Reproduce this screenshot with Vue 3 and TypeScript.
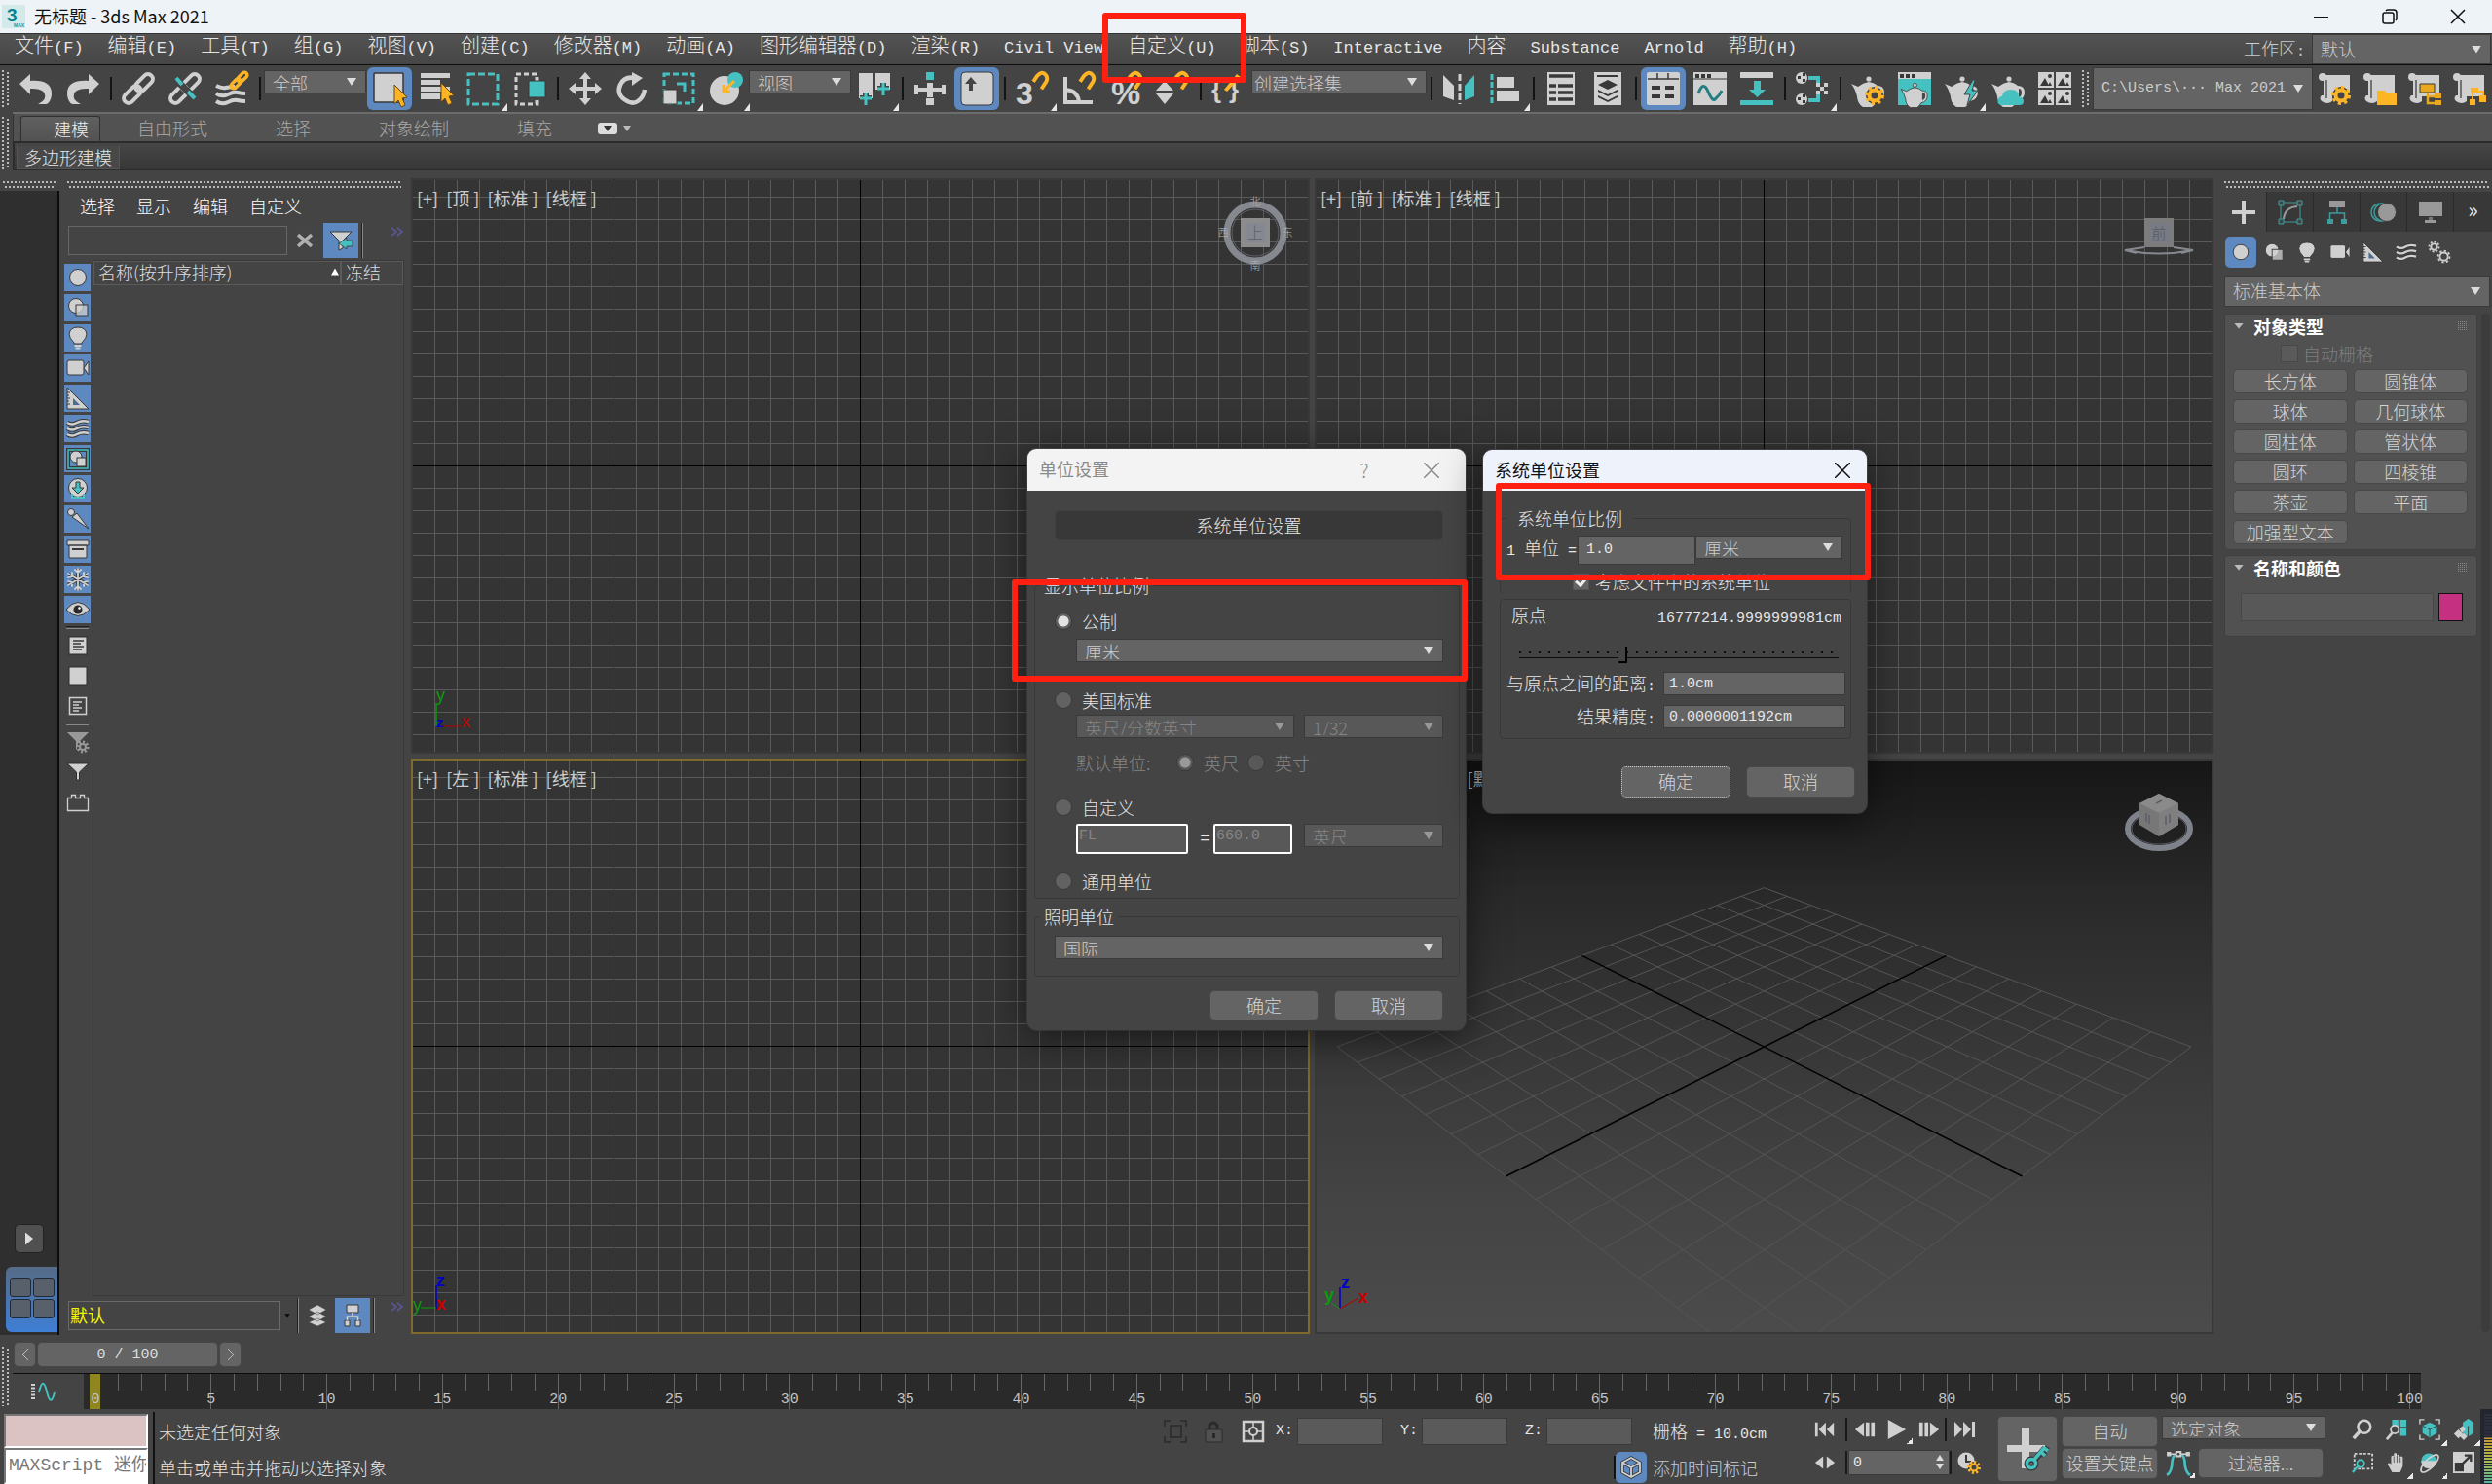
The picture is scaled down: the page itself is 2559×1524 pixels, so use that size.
<script setup lang="ts">
import { h, ref } from 'vue'

const G = '#d0d0d0'
const T = '#45c1c1'
const Y = '#fdb425'
const D = '#383838'

const gear = (cx: number, cy: number, r: number, c: string, w = 3): string =>
  `<circle cx="${cx}" cy="${cy}" r="${r}" fill="none" stroke="${c}" stroke-width="${w}"/>` +
  `<circle cx="${cx}" cy="${cy}" r="${r + w / 2 + 1}" fill="none" stroke="${c}" stroke-width="3" pathLength="80" stroke-dasharray="5 5"/>`
const corner = `<path d="M42 32v8h-6z" fill="#e8e8e8"/>`
const teapot = (x: number, y: number, s: number, c: string): string =>
  `<g transform="translate(${x} ${y}) scale(${s})"><circle cx="18" cy="3" r="2.6" fill="${c}"/><path d="M0 8l7 3q5-4 11-5 6 1 9 4 7 0 7 7 0 7-8 9-2 4-5 6H12Q6 28 6 21 4 13 0 8z" fill="${c}"/><path d="M28 13q3 0 3 4t-3 5z" fill="#444"/></g>`
const chain = (c: string, w: number): string =>
  `<g transform="rotate(-45 17 17)" fill="none" stroke="${c}" stroke-width="${w}"><rect x="-2" y="12" width="21" height="10" rx="5"/><rect x="15" y="12" width="21" height="10" rx="5"/></g>`
const waves = (c: string, w: number): string =>
  `<g fill="none" stroke="${c}" stroke-width="${w}"><path d="M1 6q5 3 10 0t12-1"/><path d="M1 12q5 3 10 0t12-1"/><path d="M1 18q5 3 10 0t12-1"/></g>`
const magnet = `<path d="M18 10l4-6q5-6 9-1 3 4-1 9l-4 6" fill="none" stroke="${Y}" stroke-width="4"/><path d="M16 9l4 3M24 16l4 3" stroke="${D}" stroke-width="1"/>`
const cursor = (x: number, y: number): string =>
  `<path d="M${x} ${y}l13 13-5 1 3 7-4 2-3-7-4 4z" fill="${Y}" stroke="#6b4a10" stroke-width="1"/>`
const scroll = `<path d="M5 3h27v22H14v5q-5 4-11 0-3-3 0-6h2z" fill="${G}"/><circle cx="4" cy="5" r="4" fill="${G}"/><path d="M8 8v19" stroke="#555" stroke-width="1.5"/>`
const orb = `<circle cx="12" cy="12" r="8.5" fill="${G}" stroke="${D}"/>`
const diamonds = `<path d="M12 1l9 5-9 5-9-5zM12 8l9 5-9 5-9-5zM12 15l9 4-9 4-9-4z" fill="${G}" stroke="${D}" stroke-width=".5"/>`

const art: Record<string, string> = {
  undo: `<path d="M0 12L11 2v7c14-1 22 3 22 13 0 6-3 11-6 11h-8c6-3 8-6 7-10-1-5-7-6-15-6v6z" fill="${G}"/>`,
  redo: `<g transform="matrix(-1 0 0 1 34 0)"><path d="M0 12L11 2v7c14-1 22 3 22 13 0 6-3 11-6 11h-8c6-3 8-6 7-10-1-5-7-6-15-6v6z" fill="${G}"/></g>`,
  link: chain(G, 4),
  unlink: chain(G, 4) + `<path d="M17 17m-9-9l18 18" stroke="#444" stroke-width="7"/><path d="M8 6l6 7M20 20l7 7" stroke="${T}" stroke-width="4"/>`,
  bind: `<path d="M1 14q6 3 10 2t9-1M1 22q6 4 12 1t10-2 8 1M1 30q6 4 12 1t10-2 8 1" fill="none" stroke="${G}" stroke-width="4"/><g transform="translate(15 -1) scale(.56)">${chain(Y, 6)}</g>`,
  select: `<rect x="1" y="1" width="30" height="30" rx="1" fill="${G}" stroke="${D}" stroke-width="1.500"/>${cursor(22, 13)}`,
  selname: `<path d="M1 1h30v5H1zM1 8h20v5H1zM1 15h30v5H1zM1 22h20v6H1z" fill="${G}"/>${cursor(22, 11)}`,
  region: `<rect x="2" y="2" width="30" height="31" fill="none" stroke="${T}" stroke-width="3" stroke-dasharray="7 3"/>`,
  crossing: `<rect x="3" y="2" width="21" height="31" fill="none" stroke="${G}" stroke-width="3" stroke-dasharray="5 3"/><rect x="16" y="9" width="17" height="17" fill="${T}" stroke="${D}"/>`,
  move: `<path d="M17 0l6 7h-4v8h8v-4l7 6-7 6v-4h-8v8h4l-6 7-6-7h4v-8H7v4l-7-6 7-6v4h8V7h-4z" fill="${G}"/>`,
  rotate: `<path d="M20 6Q9 4 5 13T9 28t14 2 7-12" fill="none" stroke="${G}" stroke-width="4.500"/><path d="M17 0l11 6-11 8z" fill="${G}"/>`,
  scale: `<rect x="2" y="2" width="30" height="30" fill="none" stroke="${T}" stroke-width="3" stroke-dasharray="6 3"/><rect x="1" y="18" width="14" height="15" fill="${G}" stroke="${D}"/><path d="M15 12h8v8" fill="none" stroke="${T}" stroke-width="3"/>`,
  place: `<circle cx="16" cy="19" r="15" fill="${G}"/><circle cx="27" cy="8" r="8" fill="${T}"/><path d="M26 9L15 20m0-7v7h7" fill="none" stroke="${Y}" stroke-width="3"/>`,
  pivot: `<path d="M1 1h14v26H1zM18 1h15v17H18z" fill="${G}"/><path d="M8 21v13M2 27h12M26 11v13M20 17h12" stroke="#444" stroke-width="6"/><path d="M8 21v13M2 27h12M26 11v13M20 17h12" stroke="${T}" stroke-width="3"/>`,
  manip: `<path d="M14 11h6v5h9v-3h4v10h-4v-3h-9v6h-6v-6H5v3H1V13h4v3h9z" fill="${G}"/><rect x="13" y="0" width="8" height="8" fill="${T}"/><rect x="13" y="27" width="8" height="7" fill="${G}"/>`,
  keyb: `<rect x="1" y="0" width="33" height="34" rx="4" fill="${G}" stroke="${D}"/><path d="M11 5l6 7h-4v7H9v-7H5z" fill="#444"/>`,
  snap: `<text x="0" y="33" font-family="Liberation Sans" font-weight="bold" font-size="32" fill="${G}">3</text>${magnet}`,
  angle: `<path d="M3 5v26h28M3 18q13 1 14 13" fill="none" stroke="${G}" stroke-width="4"/>${magnet}`,
  percent: `<text x="2" y="33" font-family="Liberation Sans" font-weight="bold" font-size="34" fill="${G}">%</text>${magnet}`,
  spin: `<path d="M9 9l9 10H0zM0 22h18L9 33z" fill="${G}"/>${magnet}`,
  named: `<text x="0" y="27" font-family="Liberation Sans" font-weight="bold" font-size="26" fill="${G}">{</text><text x="18" y="27" font-family="Liberation Sans" font-weight="bold" font-size="26" fill="${G}">}</text><path d="M13 18L26 2l4 3-14 15z" fill="${Y}"/>`,
  mirror: `<path d="M1 3l11 11v15L1 25z" fill="${G}"/><path d="M33 3L23 14v15l10-4z" fill="${T}"/><path d="M18 2v31" stroke="${G}" stroke-width="3" stroke-dasharray="7 3"/>`,
  align: `<path d="M3 2v31" stroke="${T}" stroke-width="3" stroke-dasharray="6 2"/><path d="M8 5h18v11H8zM8 19h23v11H8z" fill="${G}"/>`,
  sheet: `<rect x="3" y="0" width="28" height="34" fill="${G}"/><path d="M5 4h24M5 14h7M14 14h15M5 21h7M14 21h15M5 28h7M14 28h15" stroke="${D}" stroke-width="3.500"/>`,
  layers: `<rect x="3" y="0" width="28" height="34" fill="${G}"/><path d="M6 4h22" stroke="${D}" stroke-width="2"/><path d="M17 8l10 5-10 5-10-5zM7 18l10 5 10-5v2l-10 5-10-5zM7 24l10 5 10-5v2l-10 5-10-5z" fill="${D}"/>`,
  ribbon: `<rect x="0" y="0" width="34" height="34" rx="2" fill="${G}"/><path d="M1 7h32M11 1v6M22 1v6" stroke="${D}" stroke-width="1.500"/><path d="M5 16h9M19 16h9M5 25h9M19 25h9" stroke="${D}" stroke-width="4"/>`,
  curve: `<rect x="0" y="0" width="34" height="34" fill="${G}"/><path d="M0 7h34" stroke="${D}"/><path d="M2 4h4M8 4h4M14 4h4" stroke="${D}" stroke-width="4"/><path d="M5 22q5-14 10-2t8 7q4-3 6-8" fill="none" stroke="#237c80" stroke-width="3"/>`,
  schem: `<rect x="0" y="0" width="34" height="6" fill="${G}"/><path d="M14 9h7v9h5l-8.500 8L9 18h5zM0 29h34v5H0z" fill="${T}"/>`,
  nodes: `<path d="M13 6h10v8M13 29h10v-6" fill="none" stroke="${T}" stroke-width="4"/><circle cx="6" cy="6" r="6" fill="${G}"/><circle cx="6" cy="28" r="6" fill="${G}"/><path d="M2 4h3v3H2zM7 7h3v3H7zM7 1h3v3H7zM2 26h3v3H2zM7 29h3v3H7zM7 23h3v3H7z" fill="${D}"/><path d="M21 11h4v4h4v-4h4v4h-4v4h4v4h-4v-4h-4v4h-4v-4h4v-4h-4z" fill="${G}"/>`,
  rsetup: teapot(0, 4, 1, G) + `<circle cx="24" cy="24" r="9" fill="#444"/>` + gear(24, 24, 5.5, Y, 4),
  rframe: `<rect x="0" y="0" width="34" height="34" fill="${T}"/><path d="M0 0h34v7H0z" fill="${G}"/><path d="M2 4h4M8 4h4M14 4h4" stroke="${D}" stroke-width="4"/><g stroke="${D}" stroke-width="1">${teapot(3, 11, 0.8, G)}</g>`,
  render: teapot(0, 4, 1, G) + `<path d="M29 8L20 23h6l-3 11 11-15h-6l3-11z" fill="${T}" stroke="#444"/>`,
  cloud: teapot(0, 4, 1, G) + `<path d="M10 34q-5-1-3-6 1-3 4-3 1-7 9-7t8 7q5 1 5 5t-4 4z" fill="${T}"/>`,
  gallery: `<path d="M0 0h16v16H0zM18 0h16v16H18zM0 18h16v16H0zM18 18h16v16H18z" fill="${G}"/><path d="M2 14l5-8 4 8zM20 14l5-8 4 8zM2 32l5-8 4 8zM20 32l5-8 4 8zM10 14l2-4 2 4zM28 14l2-4 2 4zM10 32l2-4 2 4zM28 32l2-4 2 4z" fill="${D}"/><circle cx="12" cy="4" r="2" fill="${D}"/><circle cx="30" cy="4" r="2" fill="${D}"/><circle cx="12" cy="22" r="2" fill="${D}"/><circle cx="30" cy="22" r="2" fill="${D}"/>`,
  sgear: scroll + `<circle cx="23" cy="24" r="9" fill="#444"/>` + gear(23, 24, 5.5, Y, 4),
  sfolder: scroll + `<path d="M14 19h8l2 3h10v12H14z" fill="${Y}"/>`,
  sproj: scroll + `<path d="M12 12h15v9H12z" fill="#e8a820" stroke="${D}"/><path d="M20 22v10h8M20 25h8" fill="none" stroke="#e8a820" stroke-width="2.500"/><path d="M27 21h7v6h-7zM27 29h7v5h-7z" fill="#e8a820"/>`,
  stree: scroll + `<path d="M18 16h8v6h-8zM27 24h7v7h-7zM17 28h6v6h-6z" fill="${Y}"/><path d="M20 22v7M24 20h7v5" fill="none" stroke="${Y}" stroke-width="2"/>`,

  sphere: orb,
  shapes: `<circle cx="10" cy="10" r="7.500" fill="${G}" stroke="${D}"/><rect x="10" y="9" width="12" height="12" fill="${G}" fill-opacity=".75" stroke="${D}"/>`,
  bulb: `<path d="M12 1q8 0 9 7 0 4-5 9v1H8v-1q-5-5-5-9 1-7 9-7z" fill="${G}" stroke="${D}"/><path d="M8.500 20h7M9.500 22.500h5" stroke="${G}" stroke-width="1.800"/>`,
  camera: `<rect x="1" y="4" width="17" height="15" rx="2" fill="${G}" stroke="${D}"/><path d="M18 12l5-7v14z" fill="${G}" stroke="${D}"/>`,
  ruler: `<path d="M1 1l22 22H1z" fill="${G}" stroke="${D}"/><path d="M7 12l7 7H7z" fill="#4d6a90"/><path d="M1 6h3M1 9h2M1 12h3M1 15h2M1 18h3" stroke="${D}"/>`,
  waves: waves(D, 4.4) + waves(G, 2.6),
  contain: `<rect x="2" y="3" width="20" height="19" fill="none" stroke="${D}" stroke-width="4"/><rect x="2" y="3" width="20" height="19" fill="none" stroke="${T}" stroke-width="1.500"/><circle cx="10" cy="10" r="6" fill="${G}" stroke="${D}"/><rect x="11" y="11" width="9" height="9" fill="${G}" stroke="${D}"/>`,
  xref: `<circle cx="12" cy="11" r="9.500" fill="${G}" stroke="${D}"/><path d="M10 5h4v6h4l-6 6-6-6h4z" fill="${T}" stroke="${D}"/><path d="M6 17v4h12v-4" fill="none" stroke="${T}" stroke-width="2"/>`,
  bone: `<circle cx="5" cy="5" r="3.500" fill="${G}" stroke="${D}"/><path d="M6 10l5-4 12 16z" fill="${G}" stroke="${D}"/>`,
  box: `<path d="M1 3h22v5H1zM3 8h18v13H3z" fill="${G}" stroke="${D}"/><path d="M6 12h12" stroke="${D}" stroke-width="2"/>`,
  snow: `<g fill="none" stroke="${D}" stroke-width="3.400" stroke-linecap="round"><path d="M12 2v20M3 7l18 10M3 17L21 7"/></g><g fill="none" stroke="${G}" stroke-width="1.800" stroke-linecap="round"><path d="M12 1v22M2 6l20 12M2 18L22 6M9 2l3 3 3-3M9 22l3-3 3 3M2 10l4-1V5M22 14l-4 1v4M2 14l4 1v4M22 10l-4-1V5"/></g>`,
  eye: `<path d="M0 12q12-15 24 0-12 13-24 0z" fill="${G}" stroke="${D}"/><circle cx="12" cy="12" r="4.500" fill="#2a2a2a"/><circle cx="13.500" cy="10.500" r="1.300" fill="#fff"/>`,
  doc: `<rect x="3" y="3" width="18" height="18" fill="${G}" stroke="#2d2d2d"/><path d="M7 7h11M7 10h8M7 13h11M7 16h9" stroke="${D}" stroke-width="1.500"/>`,
  square: `<rect x="3" y="3" width="18" height="18" fill="${G}" stroke="#2d2d2d"/>`,
  docline: `<rect x="3.500" y="3.500" width="17" height="17" fill="none" stroke="${G}" stroke-width="1.500"/><path d="M7 8h9M7 11h6M7 14h9M7 17h6" stroke="${G}" stroke-width="1.300"/>`,
  fgear: `<path d="M1 2h22l-9 9v4l-4 5v-9z" fill="#999"/><circle cx="17" cy="17" r="6" fill="#444"/>` + gear(17, 17, 3, '#999', 2),
  funnel: `<path d="M1 3h22l-9.500 9v8h-3v-8z" fill="${G}" stroke="#2d2d2d"/>`,
  brick: `<path d="M1.500 7.500h4v-3h4v3h5v-3h4v3h4v13h-21z" fill="none" stroke="${G}" stroke-width="1.300"/>`,
  fsync: `<path d="M1 3h22l-9 9v8l-4 2V12z" fill="${G}" stroke="${D}"/><path d="M24 12v6h-6v3l-8-6 8-6v3z" fill="${T}" stroke="${D}" stroke-width=".8"/>`,
  stack: diamonds,
  tree: `<path d="M6 1h12v8H6zM4 17h5v6H4zM15 17h5v6h-5z" fill="${G}" stroke="${D}"/><path d="M12 9v4M6.500 17v-4h11v4" fill="none" stroke="${G}" stroke-width="1.600"/>`,
  gears: `<g fill="none" stroke="${G}" stroke-width="2"><circle cx="6" cy="6" r="3.500"/><circle cx="17" cy="17" r="4.500"/></g><g fill="none" stroke="${G}" stroke-width="2"><circle cx="6" cy="6" r="5.500" pathLength="80" stroke-dasharray="5 5"/><circle cx="17" cy="17" r="6.500" pathLength="80" stroke-dasharray="5 5"/></g>`,

  tabadd: `<path d="M10 0h4v10h10v4H14v10h-4V14H0v-4h10z" fill="${G}"/>`,
  tabmod: `<g fill="none" stroke="#3f9c9c"><path d="M2 2h20v20H2z"/></g><path d="M5 19Q6 7 19 6" fill="none" stroke="#999" stroke-width="2"/><path d="M0 0h5v5H0zM19 0h5v5h-5zM0 19h5v5H0zM19 19h5v5h-5z" fill="#444" stroke="#3f9c9c"/>`,
  tabhier: `<path d="M4 0h16v7H4z" fill="#999"/><path d="M12 7v6M4.500 19v-6h15v6" fill="none" stroke="#3f9c9c" stroke-width="1.500"/><path d="M2 19h6v5H2zM16 19h6v5h-6z" fill="#3f9c9c"/>`,
  tabmot: `<g fill="none" stroke="#3f9c9c" stroke-width="1.500"><circle cx="8" cy="12" r="9"/><circle cx="11" cy="12" r="9"/></g><circle cx="15" cy="12" r="9.500" fill="#999" stroke="#3a3a3a"/>`,
  tabdisp: `<path d="M0 1h24v15H0zM6 20h12v3H6z" fill="#999"/><path d="M10 17h4v3h-4z" fill="#777"/>`,

  first: `<path d="M1 4h3v16H1zM13 4v16L5 12zM22 4v16l-8-8z" fill="${G}"/>`,
  prev: `<path d="M11 4v16L1 12zM13 4h4v16h-4zM19 4h4v16h-4z" fill="${G}"/>`,
  play: `<path d="M2 1l20 11L2 23z" fill="${G}"/>`,
  next: `<path d="M13 4v16l10-8zM7 4h4v16H7zM1 4h4v16H1z" fill="${G}"/>`,
  last: `<path d="M20 4h3v16h-3zM11 4v16l8-8zM2 4v16l8-8z" fill="${G}"/>`,
  keys: `<path d="M10 5v14L1 12zM14 5v14l9-7z" fill="${G}"/>`,
  clock: `<circle cx="9" cy="10" r="8.500" fill="${G}"/><path d="M9 4v7h5" fill="none" stroke="${D}" stroke-width="2"/><circle cx="17" cy="17" r="6" fill="#444"/>` + gear(17, 17, 3.5, Y, 2),
  iso: `<g fill="none" stroke="#2a2a2a" stroke-width="1.500"><path d="M1 7V1h6M17 1h6v6M1 17v6h6M17 23h6v-6"/><rect x="7" y="6" width="11" height="12"/></g>`,
  lock: `<path d="M8 11V6q4-6 8 0v5" fill="none" stroke="#2a2a2a" stroke-width="3"/><rect x="4" y="10" width="17" height="13" rx="1" fill="#505050" stroke="#2a2a2a"/><path d="M12.500 14v5" stroke="#222" stroke-width="2.500"/>`,
  abs: `<rect x="2" y="2" width="20" height="20" fill="none" stroke="${G}" stroke-width="2.500"/><path d="M12 2v20M2 12h20" stroke="${G}" stroke-width="1.500"/><circle cx="12" cy="12" r="4" fill="#444" stroke="${G}" stroke-width="2"/>`,
  cube: `<path d="M12 2l9 5v10l-9 5-9-5V7zM3 7l9 5 9-5M12 12v10" fill="none" stroke="${D}" stroke-width="3.500"/><path d="M12 2l9 5v10l-9 5-9-5V7zM3 7l9 5 9-5M12 12v10" fill="none" stroke="${G}" stroke-width="1.800"/>`,
  minicurve: `<path d="M2 4v16" stroke="${G}" stroke-width="4" stroke-dasharray="2 1.500"/><path d="M8 13q4-18 8-1t8 1" fill="none" stroke="${T}" stroke-width="2"/>`,
  addkey: `<path d="M16 1h8v18h16v7H24v17h-8V26H1v-7h15z" fill="${G}"/><path d="M27 37L40 22M36 26l4 4M39 22l4 3" stroke="${D}" stroke-width="6"/><circle cx="26" cy="38" r="4.500" fill="none" stroke="${D}" stroke-width="6"/><path d="M28 35L40 21M36 26l4 4M39 22l4 3" stroke="${T}" stroke-width="3.500"/><circle cx="26" cy="38" r="4.500" fill="none" stroke="${T}" stroke-width="3.500"/>`,
  tangent: `<path d="M1 23q5-3 5-13 1-6 3-6M23 23q-5-3-5-13-1-6-3-6" fill="none" stroke="${T}" stroke-width="2.500"/><path d="M2 3h20" stroke="${G}" stroke-width="1.500"/><path d="M9 0h6v6H9zM1 1h4v4H1zM19 1h4v4h-4z" fill="${G}"/><circle cx="12" cy="3" r="1.200" fill="${D}"/>`,
  zoom: `<circle cx="14" cy="9" r="7" fill="none" stroke="${G}" stroke-width="2.800"/><path d="M9 14l-7 8" stroke="${G}" stroke-width="4"/>`,
  zoomall: `<path d="M7 1h7v8H7zM16 1h7v8h-7zM16 11h7v8h-7z" fill="${T}"/><circle cx="10" cy="12" r="4.500" fill="#444" stroke="${G}" stroke-width="2"/><path d="M7 16l-6 7" stroke="${G}" stroke-width="3"/>`,
  extents: `<path d="M1 6V1h5M18 1h5v5M1 18v5h5M18 23h5v-5" fill="none" stroke="${G}" stroke-width="1.500"/><path d="M12 4l8 4v8l-8 5-8-5V8z" fill="${T}"/><path d="M4 8l8 4 8-4M12 12v8" fill="none" stroke="${D}"/>`,
  extall: `<path d="M17 0l6 4v12l-6 4-6-4V4z" fill="${T}"/><path d="M17 8v12" stroke="${D}"/><path d="M1 17l5-5 5 5-5 5zM7 11l4-3 3 4-4 4zM8 20l4-4 4 4-4 4z" fill="${G}"/>`,
  zregion: `<rect x="3" y="2" width="20" height="17" fill="none" stroke="${G}" stroke-width="2" stroke-dasharray="3 2"/><circle cx="10" cy="13" r="4" fill="#444" stroke="${T}" stroke-width="2"/><path d="M7 16l-6 7" stroke="${T}" stroke-width="2.500"/>`,
  pan: `<path d="M7 23l-5-9q1-3 4 0V5q2-2 3 0V2q2-2 3 0v2q2-2 3 0v2q2-2 4 0v10l-3 7z" fill="${G}"/><path d="M9 5v7M12.500 4v8M16 6v6" stroke="#555"/>`,
  orbit: `<circle cx="11" cy="10" r="8.500" fill="${T}"/><path d="M11 10h8.500q-1 8-8.500 8.500t-8.500-8.500z" fill="${G}"/><ellipse cx="12" cy="13" rx="13" ry="5" transform="rotate(-45 12 13)" fill="none" stroke="${G}" stroke-width="1.800"/>`,
  maxim: `<rect x="0" y="0" width="24" height="24" fill="${G}"/><rect x="2" y="12" width="10" height="10" fill="${D}"/><path d="M11 13l8-8m-6-1h7v7" fill="none" stroke="${D}" stroke-width="2.500"/>`,
}

const Ico = (p: { n: string; b?: number; s?: number; c?: boolean }) => {
  const b = p.b ?? 24
  const s = p.s ?? b
  return h('svg', { viewBox: `0 0 ${b} ${b}`, width: s, height: s, overflow: 'visible', 'aria-hidden': 'true', innerHTML: art[p.n] + (p.c ? corner : '') })
}
Ico.props = ['n', 'b', 's', 'c']

/* Splits a label into Han and Latin runs so that each gets its own face and size. */
const Txt = (p: { t: string }) =>
  (p.t.match(/[\x20-\x7e]+|[^\x20-\x7e]+/g) ?? []).map((run) =>
    /^[\x20-\x7e]/.test(run) ? h('span', { class: 'lat' }, run) : h('span', run),
  )
Txt.props = ['t']

const menus = ['文件(F)', '编辑(E)', '工具(T)', '组(G)', '视图(V)', '创建(C)', '修改器(M)', '动画(A)', '图形编辑器(D)', '渲染(R)', 'Civil View', '自定义(U)', '脚本(S)', 'Interactive', '内容', 'Substance', 'Arnold', '帮助(H)']

interface Tool { k: 'i' | 's' | 'd'; n: string; on?: boolean; c?: boolean; w?: string }
const i = (n: string, c = false, on = false): Tool => ({ k: 'i', n, c, on })
const sep: Tool = { k: 's', n: '' }
const tools: Tool[] = [
  i('undo'), i('redo'), sep, i('link'), i('unlink'), i('bind'), sep, { k: 'd', n: '全部', w: 'w105' },
  i('select', false, true), i('selname'), i('region', true), i('crossing'), sep, i('move'), i('rotate'), i('scale', true), i('place', true),
  { k: 'd', n: '视图', w: 'w105' }, i('pivot', true), sep, i('manip'), i('keyb', false, true), sep,
  i('snap', true), i('angle'), i('percent'), i('spin'), sep, i('named'), { k: 'd', n: '创建选择集', w: 'w180' }, sep,
  i('mirror'), i('align', true), sep, i('sheet'), i('layers'), sep, i('ribbon', false, true), i('curve'), i('schem'), sep,
  i('nodes', true), sep, i('rsetup'), i('rframe'), i('render', true), i('cloud'), i('gallery'),
]
const projTools = ['sgear', 'sfolder', 'sproj', 'stree']
const filters = ['sphere', 'shapes', 'bulb', 'camera', 'ruler', 'waves', 'contain', 'xref', 'bone', 'box', 'snow', 'eye']
const cats = ['sphere', 'shapes', 'bulb', 'camera', 'ruler', 'waves', 'gears']
const tabs = ['tabadd', 'tabmod', 'tabhier', 'tabmot', 'tabdisp']
const prims = ['长方体', '圆锥体', '球体', '几何球体', '圆柱体', '管状体', '圆环', '四棱锥', '茶壶', '平面', '加强型文本']
const nav = [
  { n: 'zoom', c: false }, { n: 'zoomall', c: false }, { n: 'extents', c: true }, { n: 'extall', c: true },
  { n: 'zregion', c: false }, { n: 'pan', c: true }, { n: 'orbit', c: true }, { n: 'maxim', c: false },
]
const frames = Array.from({ length: 101 }, (_, f) => f)

/* Home grid of the perspective view: 14 x 14 cells projected on the view plane. */
const project = (u: number, v: number): [number, number] => {
  const w = 1 - 0.0247 * (u + v)
  return [461 + (31.43 * (u - v)) / w, -342 + 638 / w]
}
const seg = (a: [number, number], b: [number, number]) => `M${a[0].toFixed(1)} ${a[1].toFixed(1)}L${b[0].toFixed(1)} ${b[1].toFixed(1)}`
const gridLines = Array.from({ length: 15 }, (_, k) => k - 7).filter((k) => k !== 0)
const gridPath = gridLines.map((k) => seg(project(k, -7), project(k, 7)) + seg(project(-7, k), project(7, k))).join('')
const axisPath = seg(project(0, -7), project(0, 7)) + seg(project(-7, 0), project(7, 0))

const unit = ref('metric')
const inch = ref('ft')
const origin = ref(32)
</script>

<template>
  <div class="app">
    <header class="titlebar">
      <svg class="logo" viewBox="0 0 24 24" width="24" height="24" aria-hidden="true">
        <rect width="24" height="24" fill="#d3e9ea" />
        <text x="5" y="17" font-family="Liberation Sans" font-weight="bold" font-size="19" fill="#0b8290">3</text>
        <text x="12" y="23" font-family="Liberation Sans" font-weight="bold" font-size="5" fill="#0aa0b0">MAX</text>
      </svg>
      <h1>无标题 - 3ds Max 2021</h1>
      <div class="winbtns">
        <button aria-label="最小化"><svg viewBox="0 0 16 16" width="16" height="16"><path d="M0 8.500h15" stroke="#111" /></svg></button>
        <button aria-label="还原"><svg viewBox="0 0 16 16" width="16" height="16" fill="none" stroke="#111" stroke-width="1.500"><rect x="1" y="4" width="11" height="11" rx="2" /><path d="M4 2q1-1 2-1h6q3 0 3 3v6q0 1-1 2" /></svg></button>
        <button aria-label="关闭"><svg viewBox="0 0 16 16" width="16" height="16"><path d="M1 1l14 14M15 1L1 15" stroke="#111" stroke-width="1.500" /></svg></button>
      </div>
    </header>

    <nav class="menubar">
      <a v-for="m in menus" :key="m" href="#"><Txt :t="m" /></a>
      <label class="space" for="ws"><Txt t="工作区:" /></label>
      <span class="sel ws"><select id="ws"><option>默认</option></select></span>
    </nav>

    <div class="toolbar">
      <i class="grip v"></i>
      <template v-for="(t, k) in tools" :key="k">
        <button v-if="t.k === 'i'" class="tool" :class="{ on: t.on }"><Ico :n="t.n" :b="34" :c="t.c" /></button>
        <i v-else-if="t.k === 's'" class="tsep"></i>
        <span v-else class="sel tsel" :class="t.w"><select :aria-label="t.n"><option>{{ t.n }}</option></select></span>
      </template>
      <i class="grip v mid"></i>
      <span class="sel path"><select aria-label="项目路径"><option>C:\Users\··· Max 2021</option></select></span>
      <button v-for="p in projTools" :key="p" class="tool proj"><Ico :n="p" :b="34" /></button>
    </div>

    <div class="ribbonwrap">
      <i class="grip v"></i>
      <div class="ribbon">
        <div class="rtabs">
          <button class="on">建模</button><button>自由形式</button><button>选择</button><button>对象绘制</button><button>填充</button>
          <button class="pill" aria-label="最小化功能区"><i></i></button><i class="tri"></i>
        </div>
        <div class="rpanel"><button>多边形建模</button></div>
      </div>
    </div>

    <main class="work">
      <aside class="strip">
        <i class="grip h"></i>
        <div class="stripbody">
          <button class="playbtn" aria-label="展开"><i></i></button>
          <button class="layout" aria-label="视口布局"><i></i><i></i><i></i><i></i></button>
        </div>
      </aside>

      <section class="explorer">
        <i class="grip h"></i>
        <nav class="emenu"><a href="#">选择</a><a href="#">显示</a><a href="#">编辑</a><a href="#">自定义</a></nav>
        <div class="search">
          <input type="text" aria-label="查找" />
          <button class="clear" aria-label="清除"><svg viewBox="0 0 16 16" width="16" height="16"><path d="M1 2l14 12M15 2L1 14" stroke="#b0b0b0" stroke-width="3.500" /></svg></button>
          <button class="blue" aria-label="同步选择"><Ico n="fsync" /></button>
          <i class="vline"></i><svg class="more" viewBox="0 0 14 10" width="14" height="10"><path d="M1 1l5 4-5 4M7 1l5 4-5 4" fill="none" stroke="#57578f" stroke-width="1.800" /></svg>
        </div>
        <div class="ebody">
          <div class="filters">
            <button v-for="f in filters" :key="f" class="fil"><Ico :n="f" /></button>
            <i class="hsep"></i>
            <button v-for="f in ['doc', 'square', 'docline']" :key="f" class="fil plain"><Ico :n="f" /></button>
            <i class="hsep"></i>
            <button v-for="f in ['fgear', 'funnel', 'brick']" :key="f" class="fil plain"><Ico :n="f" /></button>
          </div>
          <div class="list">
            <table>
              <thead><tr><th class="name"><span class="thin">名称(按升序排序)<i></i></span></th><th>冻结</th></tr></thead>
            </table>
          </div>
        </div>
        <div class="efoot">
          <input type="text" value="默认" aria-label="层" />
          <i class="tri dark"></i><i class="vline"></i>
          <button class="lay" aria-label="层管理"><Ico n="stack" /></button>
          <button class="blue" aria-label="层次"><Ico n="tree" /></button>
          <i class="vline"></i><svg class="more" viewBox="0 0 14 10" width="14" height="10"><path d="M1 1l5 4-5 4M7 1l5 4-5 4" fill="none" stroke="#57578f" stroke-width="1.800" /></svg>
        </div>
      </section>

      <section class="views">
        <div class="view grid">
          <p><span>[+]</span><span>[顶 ]</span><span>[标准 ]</span><span>[线框 ]</span></p>
          <svg class="cube" viewBox="0 0 80 84" width="80" height="84">
            <circle cx="40" cy="42" r="29" fill="none" stroke="#85888e" stroke-width="7" />
            <circle cx="40" cy="42" r="24" fill="none" stroke="#5d6066" />
            <rect x="25" y="27" width="30" height="30" fill="#8c8c8c" />
            <rect x="30" y="32" width="20" height="20" fill="#858891" />
            <text x="40" y="48" text-anchor="middle" font-size="16" fill="#5d6068">上</text>
            <g font-size="11" fill="#b4b4b4" text-anchor="middle"><text x="40" y="14">北</text><text x="40" y="80">南</text><text x="7" y="46">西</text><text x="73" y="46">东</text></g>
          </svg>
          <svg class="axis" viewBox="0 0 70 50" width="70" height="50"><path d="M24 18v24" stroke="#0a9a0a" stroke-width="1.500" /><path d="M30 42h20" stroke="#b40000" /><g font-family="Liberation Sans" font-size="18"><text x="24" y="16" fill="#0a9a0a">y</text><text x="24" y="43" fill="#0000c8" font-weight="bold" font-size="15">z</text><text x="50" y="43" fill="#c80000">x</text></g></svg>
        </div>
        <div class="view grid">
          <p><span>[+]</span><span>[前 ]</span><span>[标准 ]</span><span>[线框 ]</span></p>
          <svg class="cube" viewBox="0 0 80 84" width="80" height="84">
            <path d="M25 57l-20 3 12 3M55 57l20 3-12 3M5 60q35 7 70 0" fill="none" stroke="#85888e" stroke-width="2" />
            <rect x="25" y="27" width="30" height="30" fill="#7c7c7c" />
            <rect x="30" y="32" width="20" height="20" fill="#787b84" />
            <text x="40" y="48" text-anchor="middle" font-size="15" fill="#565961">前</text>
          </svg>
        </div>
        <div class="view grid active">
          <p><span>[+]</span><span>[左 ]</span><span>[标准 ]</span><span>[线框 ]</span></p>
          <svg class="axis" viewBox="0 0 70 50" width="70" height="50"><path d="M24 20v24" stroke="#0000c8" stroke-width="1.500" /><path d="M8 43h16" stroke="#0a9a0a" /><g font-family="Liberation Sans" font-size="18"><text x="0" y="46" fill="#0a9a0a">y</text><text x="24" y="21" fill="#0000c8" font-weight="bold">z</text><text x="24" y="45" fill="#c80000" font-weight="bold">x</text></g></svg>
        </div>
        <div class="view persp">
          <svg class="plane" viewBox="0 0 922 591" preserveAspectRatio="xMidYMid slice">
            <path :d="gridPath" stroke="#555" fill="none" /><path :d="axisPath" stroke="#000" stroke-width="1.500" fill="none" />
          </svg>
          <p><span>[+]</span><span>[透视 ]</span><span>[标准 ]</span><span>[默认明暗处理 ]</span></p>
          <svg class="cube" viewBox="0 0 80 84" width="80" height="84">
            <ellipse cx="40" cy="46" rx="32" ry="20" fill="none" stroke="#7e828a" stroke-width="6" />
            <ellipse cx="40" cy="46" rx="28" ry="16" fill="none" stroke="#555860" />
            <path d="M40 10l20 10v22L40 54 20 42V20z" fill="#777" /><path d="M40 10l20 10-20 10-20-10z" fill="#8a8a8a" /><path d="M40 30l20-10v22L40 54z" fill="#7f7f7f" />
            <path d="M27 30v9m3-7v9M47 33v9m4-11v9m-14-20l6-3" stroke="#5e5e66" stroke-width="1.500" />
          </svg>
          <svg class="axis" viewBox="0 0 70 50" width="70" height="50"><path d="M24 22v22" stroke="#0000c8" stroke-width="1.500" /><path d="M24 44l19-11" stroke="#b40000" /><path d="M24 44l-9-6" stroke="#0a9a0a" /><g font-family="Liberation Sans" font-size="18" font-weight="bold"><text x="8" y="36" fill="#0a9a0a">y</text><text x="25" y="23" fill="#0000c8">z</text><text x="43" y="38" fill="#c80000">x</text></g></svg>
        </div>
      </section>

      <aside class="panel">
        <i class="grip h"></i>
        <div class="ptabs">
          <button v-for="(t, k) in tabs" :key="t" :class="{ on: k === 0 }"><Ico :n="t" /></button>
          <b>»</b>
        </div>
        <div class="cats"><button v-for="(c, k) in cats" :key="c" :class="{ on: k === 0 }"><Ico :n="c" :s="22" /></button></div>
        <span class="sel big"><select aria-label="类别"><option>标准基本体</option></select></span>
        <div class="rolls">
          <div class="rolllist">
            <section class="roll">
              <h2><i class="tri"></i>对象类型<i class="dots"></i></h2>
              <label class="auto"><input type="checkbox" disabled />自动栅格</label>
              <div class="prims"><button v-for="p in prims" :key="p" class="btn">{{ p }}</button></div>
            </section>
            <section class="roll">
              <h2><i class="tri"></i>名称和颜色<i class="dots"></i></h2>
              <div class="namecol"><input type="text" aria-label="名称" /><button class="swatch" aria-label="颜色"></button></div>
            </section>
          </div>
          <i class="track"></i>
        </div>
      </aside>
    </main>

    <div class="timeline">
      <i class="grip v"></i>
      <div class="tl">
        <div class="slider">
          <button class="btn" aria-label="上一帧"><svg viewBox="0 0 8 14" width="8" height="14"><path d="M7 1L1 7l6 6" fill="none" stroke="#bbb" /></svg></button>
          <button class="btn frame">0 / 100</button>
          <button class="btn" aria-label="下一帧"><svg viewBox="0 0 8 14" width="8" height="14"><path d="M1 1l6 6-6 6" fill="none" stroke="#bbb" /></svg></button>
        </div>
        <div class="track-row">
          <button class="mini" aria-label="迷你曲线编辑器"><Ico n="minicurve" /></button>
          <div class="ruler">
            <span v-for="f in frames" :key="f" :class="{ major: f % 5 === 0, now: f === 0 }"><b v-if="f % 5 === 0">{{ f }}</b></span>
          </div>
        </div>
      </div>
    </div>

    <footer class="status">
      <div class="script"><input class="pink" type="text" aria-label="宏录制" /><input class="white" type="text" value="MAXScript 迷你" aria-label="MAXScript" /></div>
      <i class="bline"></i>
      <div class="msgs"><p>未选定任何对象</p><p>单击或单击并拖动以选择对象</p></div>
      <div class="coords">
        <div class="crow">
          <Ico n="iso" class="iso" /><Ico n="lock" class="lock" /><Ico n="abs" class="abs" />
          <label>X:<input type="text" /></label><label>Y:<input type="text" /></label><label>Z:<input type="text" /></label>
          <span class="gridsize"><Txt t="栅格 = 10.0cm" /></span>
        </div>
        <div class="crow tag"><i class="bline"></i><button class="cubebtn" aria-label="时间标记"><Ico n="cube" /></button><span>添加时间标记</span></div>
      </div>
      <div class="playback">
        <div class="prow"><button class="w42"><Ico n="first" :s="22" /></button><i class="psep"></i><button><Ico n="prev" :s="22" /></button><button class="fly"><Ico n="play" :s="22" /></button><button><Ico n="next" :s="22" /></button><i class="psep"></i><button><Ico n="last" :s="24" /></button></div>
        <div class="prow"><button class="w42"><Ico n="keys" :s="22" /></button><i class="psep"></i><span class="num"><input type="text" value="0" aria-label="当前帧" /><i class="up"></i><i class="dn"></i></span><i class="psep"></i><button><Ico n="clock" /></button></div>
      </div>
      <button class="btn addkey" aria-label="设置关键点"><Ico n="addkey" :b="44" /></button>
      <div class="keycol"><button class="btn">自动</button><button class="btn">设置关键点</button></div>
      <div class="selcol">
        <span class="sel tsel"><select aria-label="选择集"><option>选定对象</option></select></span>
        <div class="filrow"><button class="fly" aria-label="切线"><Ico n="tangent" :s="26" /></button><button class="btn">过滤器...</button></div>
      </div>
      <div class="nav"><button v-for="n in nav" :key="n.n" :class="{ fly: n.c }"><Ico :n="n.n" :s="22" /></button></div>
      <i class="meter"></i>
    </footer>

    <div class="dialog units" role="dialog" aria-label="单位设置">
      <header><h2>单位设置</h2><button aria-label="帮助">?</button><button aria-label="关闭"><svg viewBox="0 0 16 16" width="16" height="16"><path d="M0 0l16 16M16 0L0 16" stroke="#8a8a8a" stroke-width="1.500" /></svg></button></header>
      <div class="dbody">
        <button class="sysbtn">系统单位设置</button>
        <fieldset class="f1">
          <legend>显示单位比例</legend>
          <label class="rad"><input v-model="unit" type="radio" name="unit" value="metric" />公制</label>
          <div class="line m6"><span class="sel grow"><select aria-label="公制单位"><option>厘米</option></select></span></div>
          <label class="rad m27"><input v-model="unit" type="radio" name="unit" value="us" />美国标准</label>
          <div class="line m3"><span class="sel grow off"><select disabled aria-label="美制单位"><option>英尺/分数英寸</option></select></span><span class="sel frac off"><select disabled aria-label="分数"><option>1/32</option></select></span></div>
          <div class="line def"><span>默认单位:</span><label class="rad off"><input v-model="inch" type="radio" name="inch" value="ft" disabled />英尺</label><label class="rad off"><input v-model="inch" type="radio" name="inch" value="in" disabled />英寸</label></div>
          <label class="rad m22"><input v-model="unit" type="radio" name="unit" value="custom" />自定义</label>
          <div class="line cust"><input type="text" value="FL" disabled aria-label="自定义名称" /><b>=</b><input class="short" type="text" value="660.0" disabled aria-label="自定义值" /><span class="sel frac off"><select disabled aria-label="自定义单位"><option>英尺</option></select></span></div>
          <label class="rad m16"><input v-model="unit" type="radio" name="unit" value="generic" />通用单位</label>
        </fieldset>
        <fieldset class="f2">
          <legend>照明单位</legend>
          <span class="sel"><select aria-label="照明单位"><option>国际</option></select></span>
        </fieldset>
        <div class="acts"><button class="btn">确定</button><button class="btn">取消</button></div>
      </div>
    </div>

    <div class="dialog system" role="dialog" aria-label="系统单位设置">
      <header><h2>系统单位设置</h2><button aria-label="关闭"><svg viewBox="0 0 16 16" width="16" height="16"><path d="M0 0l16 16M16 0L0 16" stroke="#111" stroke-width="1.500" /></svg></button></header>
      <div class="dbody">
        <fieldset class="s1">
          <legend>系统单位比例</legend>
          <div class="line scale"><label for="sc"><Txt t="1 单位 =" /></label><input id="sc" type="text" value="1.0" /><span class="sel grow"><select aria-label="单位"><option>厘米</option></select></span></div>
          <label class="chk"><input type="checkbox" checked />考虑文件中的系统单位</label>
        </fieldset>
        <div class="s2">
          <div class="orig"><span>原点</span><output class="mono">16777214.9999999981cm</output></div>
          <div class="rangewrap"><input v-model="origin" type="range" min="0" max="100" aria-label="原点" /></div>
          <div class="line res"><label for="dist"><Txt t="与原点之间的距离:" /></label><input id="dist" type="text" value="1.0cm" /></div>
          <div class="line res"><label for="prec"><Txt t="结果精度:" /></label><input id="prec" type="text" value="0.0000001192cm" /></div>
        </div>
        <div class="acts"><button class="btn focus">确定</button><button class="btn">取消</button></div>
      </div>
    </div>

    <i class="mark a"></i><i class="mark b"></i><i class="mark c"></i>
  </div>
</template>

<style>
body {
  background: #444;
}
.lat {
  font-family: 'Liberation Mono', monospace;
  font-size: 15px;
  line-height: 1;
  white-space: pre;
}
.menubar a .lat {
  font-size: 17px;
}
</style>

<style scoped>
* {
  box-sizing: border-box;
}
.app {
  position: relative;
  display: flex;
  flex-direction: column;
  min-height: 100vh;
  overflow: hidden;
  background: #444;
  color: #e6e6e6;
  font: 18px/24px 'Noto Sans CJK SC', sans-serif;
  font-weight: 300;
  white-space: nowrap;
}
button, input, select {
  font: inherit;
  color: inherit;
  margin: 0;
  padding: 0;
  border: 0;
  background: none;
  border-radius: 0;
}
button {
  display: flex;
  align-items: center;
  justify-content: center;
  flex: none;
}
a {
  color: inherit;
  text-decoration: none;
}
i {
  display: block;
  flex: none;
}
h1, h2, p {
  margin: 0;
  font-size: 18px;
  font-weight: 400;
}
svg {
  flex: none;
}
.titlebar {
  display: flex;
  align-items: center;
  height: 34px;
  padding-left: 2px;
  background: #eef3f8;
  color: #111;
}
.titlebar h1 {
  flex: 1;
  margin-left: 9px;
  padding-bottom: 2px;
}
.winbtns {
  display: flex;
}
.winbtns button {
  width: 70px;
  height: 34px;
}
.menubar {
  display: flex;
  gap: 25px;
  height: 33px;
  padding-left: 15px;
  border-top: 1px solid #333;
  border-bottom: 1px solid #0d0d0d;
  background: linear-gradient(#535353, #464646);
  font-size: 20px;
  line-height: 22px;
}
.space {
  margin-left: auto;
  margin-right: -18px;
  font-size: 18px;
  line-height: 28px;
  color: #ccc;
}
.sel {
  position: relative;
  display: block;
  height: 24px;
  flex: none;
}
.sel select {
  appearance: none;
  display: block;
  width: 100%;
  height: 100%;
  padding: 0 24px 2px 8px;
  border: 1px solid #3a3a3a;
  background: #646464;
  color: #ccc;
  opacity: 1;
}
.sel::after {
  content: '';
  position: absolute;
  right: 10px;
  top: 50%;
  width: 10px;
  height: 8px;
  margin-top: -4px;
  background: #ddd;
  clip-path: polygon(0 0, 100% 0, 50% 100%);
}
.sel.ws {
  width: 184px;
  height: 31px;
  margin-right: 1px;
  font-size: 18px;
}
.toolbar {
  display: flex;
  align-items: center;
  height: 48px;
}
.grip.v {
  width: 7px;
  height: 38px;
  margin: 0 4px 0 2px;
  background: linear-gradient(#bbb 50%, transparent 50%) 0 0 / 2px 4px repeat-y, linear-gradient(#bbb 50%, transparent 50%) 5px 2px / 2px 4px repeat-y;
}
.grip.v.mid {
  margin: 0 4px 0 4px;
}
.grip.h {
  height: 7px;
  background: linear-gradient(90deg, #bbb 50%, transparent 50%) 0 0 / 4px 2px repeat-x, linear-gradient(90deg, #bbb 50%, transparent 50%) 2px 5px / 4px 2px repeat-x;
}
.tool {
  position: relative;
  width: 48px;
  height: 44px;
}
.tool.on {
  width: 46px;
  margin: 0 1px;
  border-radius: 6px;
  background: #5d89c0;
}
.tool.proj {
  width: 46px;
}
.tsep {
  width: 9px;
  height: 24px;
  background: linear-gradient(#141414, #141414) 4px 0 / 2px 100% no-repeat;
}
.tsel {
  align-self: flex-start;
  margin-top: 5px;
}
.w105 {
  width: 105px;
}
.w180 {
  width: 180px;
}
.w180 select {
  padding-left: 2px;
}
.path {
  flex: 1;
  height: 44px;
}
.path select {
  padding-bottom: 0;
  font-family: 'Liberation Mono', monospace;
  font-size: 15px;
}
.ribbonwrap {
  display: flex;
}
.ribbonwrap .grip.v {
  height: 54px;
  margin-top: 5px;
}
.ribbon {
  flex: 1;
  border-top: 2px solid #6c6c6c;
}
.rtabs {
  display: flex;
  align-items: flex-end;
  height: 30px;
  padding-left: 7px;
  background: #525252;
  border-left: 1px solid #333;
  border-bottom: 2px solid #2c2c2c;
  color: #a8a8a8;
}
.rtabs button {
  height: 26px;
  margin-right: 70px;
  padding-bottom: 2px;
}
.rtabs .on {
  width: 82px;
  margin-right: 38px;
  padding-left: 22px;
  border: 1px solid #303030;
  border-bottom: 0;
  border-radius: 3px 3px 0 0;
  background: linear-gradient(#606060, #525252);
  color: #eee;
}
.rtabs .pill {
  width: 20px;
  height: 12px;
  margin: 0 6px 7px -23px;
  padding: 0;
  border-radius: 3px;
  background: #ddd;
}
.pill i {
  width: 8px;
  height: 6px;
  background: #333;
  clip-path: polygon(0 0, 100% 0, 50% 100%);
}
.tri {
  width: 8px;
  height: 6px;
  background: #bbb;
  clip-path: polygon(0 0, 100% 0, 50% 100%);
}
.rtabs .tri {
  margin-bottom: 10px;
}
.rpanel {
  height: 28px;
  padding: 2px 0 0 2px;
  background: linear-gradient(#464646, #373737);
  border-left: 2px solid #2c2c2c;
  border-bottom: 1px solid #2c2c2c;
}
.rpanel button {
  height: 25px;
  padding: 0 7px 2px;
  border: 1px solid #555;
  border-top-color: #444;
  background: #484848;
}
.work {
  display: flex;
  flex: 1;
  min-height: 0;
}
.strip {
  display: flex;
  flex-direction: column;
  width: 61px;
  padding-top: 11px;
}
.strip .grip {
  margin: 0 4px 3px 3px;
}
.stripbody {
  display: flex;
  flex-direction: column;
  flex: 1;
  justify-content: flex-end;
  padding: 0 0 3px 6px;
  margin-bottom: 3px;
  background: #2f2f2f;
  border-right: 2px solid #0c0c0c;
}
.playbtn {
  width: 30px;
  height: 30px;
  margin: 0 0 14px 9px;
  border: 1px solid #222;
  border-radius: 5px;
  background: #505050;
}
.playbtn i {
  width: 8px;
  height: 13px;
  background: #ddd;
  clip-path: polygon(0 0, 100% 50%, 0 100%);
}
.layout {
  display: grid;
  grid-template: 20px 20px / 22px 22px;
  place-content: center;
  place-items: stretch;
  gap: 2px;
  height: 67px;
  padding-bottom: 4px;
  border-radius: 6px 0 0 6px;
  background: linear-gradient(#566b86, #3e7fd6);
}
.layout i {
  border: 1px solid #1f2a38;
  border-radius: 3px;
  background: #58606c;
}
.explorer {
  display: flex;
  flex-direction: column;
  width: 361px;
  padding-top: 11px;
}
.explorer .grip {
  margin: 0 10px 0 8px;
}
.emenu {
  display: flex;
  gap: 22px;
  padding: 6px 0 1px 21px;
  color: #fff;
}
.search, .efoot {
  display: flex;
  align-items: center;
  height: 36px;
  margin: 5px 0 0 9px;
}
.search input {
  width: 225px;
  height: 30px;
  border: 1px solid #666;
}
.clear {
  width: 36px;
}
.blue {
  width: 36px;
  height: 36px;
  background: #5d89c0;
}
.vline {
  width: 2px;
  height: 36px;
  margin-left: 3px;
  border-left: 1px solid #222;
  background: #888;
}
.more {
  margin: 0 0 18px 28px;
}
.search .blue {
  margin-left: 1px;
}
.ebody {
  display: flex;
  flex: 1;
  padding: 2px 7px 0 5px;
}
.filters {
  display: flex;
  flex-direction: column;
  gap: 3px;
  padding-top: 4px;
  width: 29px;
}
.fil {
  width: 27px;
  height: 28px;
  background: #5d89c0;
}
.fil.plain {
  background: none;
}
.hsep {
  width: 23px;
  height: 3px;
  margin-left: 2px;
  border-top: 1px solid #222;
  border-bottom: 1px solid #888;
}
.list {
  flex: 1;
  border: 1px solid #393939;
}
.list table {
  width: 100%;
  border-collapse: separate;
  border-spacing: 0;
}
.list th {
  width: 64px;
  height: 25px;
  padding: 0 0 3px 4px;
  border: 1px solid #5a5a5a;
  font-weight: 300;
  line-height: 20px;
  text-align: left;
  color: #ddd;
}
.list .name {
  width: auto;
}
.thin {
  display: flex;
  align-items: center;
  justify-content: space-between;
}
.thin i {
  width: 8px;
  height: 7px;
  margin-right: 1px;
  background: #fff;
  clip-path: polygon(50% 0, 100% 100%, 0 100%);
}
.efoot {
  margin: 2px 0 5px 9px;
}
.efoot input {
  width: 218px;
  height: 30px;
  padding: 0 0 2px 1px;
  border: 1px solid #6a6a6a;
  color: #f6f600;
  font-weight: 400;
}
.dark {
  width: 6px;
  height: 5px;
  margin: 0 4px;
  background: #111;
}
.lay {
  width: 37px;
}
.efoot .more {
  margin-left: 16px;
}
.views {
  display: grid;
  grid-template: 1fr 1fr / 1fr 1fr;
  gap: 5px;
  flex: 1;
  padding: 8px 0 4px;
}
.view {
  position: relative;
  overflow: hidden;
  border: 2px solid #393939;
  background-color: #343434;
}
.view p {
  position: absolute;
  display: flex;
  gap: 8px;
  left: 4px;
  top: 6px;
  color: #ccc;
}
.grid {
  background-image: linear-gradient(#000, #000), linear-gradient(#000, #000), linear-gradient(90deg, transparent 11px, #5a5a5a 11px, #5a5a5a 12px, transparent 12px), linear-gradient(transparent 11px, #5a5a5a 11px, #5a5a5a 12px, transparent 12px);
  background-size: 1px 100%, 100% 1px, 23px 100%, 100% 23px;
  background-position: center;
  background-repeat: no-repeat, no-repeat, repeat-x, repeat-y;
}
.view.active {
  border-color: #7d6a2c;
}
.persp {
  background: linear-gradient(#161616, #2a2a2a 25%, #3a3a3a 55%, #454545 80%, #4b4b4b);
}
.plane {
  position: absolute;
  inset: 0;
  width: 100%;
  height: 100%;
}
.cube {
  position: absolute;
  right: 14px;
  top: 12px;
}
.persp .cube {
  top: 24px;
}
.axis {
  position: absolute;
  left: 0;
  bottom: 18px;
}
.panel {
  display: flex;
  flex-direction: column;
  width: 286px;
  padding: 11px 0 0 7px;
}
.panel .grip {
  margin: 0 3px 4px 4px;
}
.ptabs {
  display: flex;
  height: 41px;
  background: #383838;
}
.ptabs button {
  width: 48px;
  border-right: 1px solid #2a2a2a;
}
.ptabs .on {
  background: #444;
}
.ptabs b {
  flex: 1;
  text-align: center;
  font-size: 22px;
  font-weight: 400;
  line-height: 34px;
}
.cats {
  display: flex;
  gap: 2px;
  margin: 5px 0 8px 5px;
}
.cats button {
  width: 32px;
  height: 32px;
}
.cats .on {
  border-radius: 5px;
  background: #5d89c0;
}
.sel.big {
  height: 32px;
  margin: 0 2px 7px 4px;
}
.rolls {
  display: flex;
  flex: 1;
  gap: 4px;
  padding-left: 4px;
}
.rolllist {
  flex: 1;
}
.track {
  width: 9px;
  margin: 0 2px 6px 0;
  border-radius: 5px;
  background: #3c3c3c;
}
.roll {
  height: 243px;
  margin-bottom: 5px;
  border: 1px solid #404040;
  border-radius: 4px;
  background: #515151;
}
.roll + .roll {
  height: 84px;
}
.roll h2 {
  display: flex;
  align-items: center;
  padding: 0 10px 3px 9px;
  height: 26px;
  font-weight: 700;
  color: #fff;
}
.roll .tri {
  width: 10px;
  margin-right: 10px;
}
.dots {
  width: 10px;
  height: 10px;
  margin-left: auto;
  background: repeating-linear-gradient(90deg, #515151 0 1px, transparent 1px 2px), repeating-linear-gradient(#888 0 1px, #515151 1px 2px);
}
.auto {
  display: flex;
  align-items: center;
  gap: 5px;
  height: 28px;
  padding-left: 57px;
  color: #7d7d7d;
}
.auto input {
  appearance: none;
  width: 18px;
  height: 18px;
  border: 1px solid #484848;
  background: #5a5a5a;
}
.prims {
  display: grid;
  grid-template-columns: 1fr 1fr;
  gap: 6px;
  padding: 2px 9px 0 8px;
}
.btn {
  padding-bottom: 2px;
  border: 1px solid #484848;
  border-radius: 5px;
  background: #646464;
  color: #d4d4d4;
}
.prims .btn {
  height: 25px;
}
.namecol {
  display: flex;
  gap: 5px;
  padding: 12px 14px 0 16px;
}
.namecol input {
  flex: 1;
  min-width: 0;
  height: 29px;
  border: 1px solid #484848;
  background: #585858;
}
.swatch {
  width: 25px;
  border: 1px solid #111;
  background: #c53081;
}
.timeline {
  display: flex;
  height: 73px;
}
.timeline .grip {
  height: 61px;
  margin-top: 9px;
}
.tl {
  flex: 1;
}
.slider {
  display: flex;
  gap: 1px;
  padding: 4px 0 6px 1px;
}
.slider .btn {
  width: 23px;
  height: 26px;
  padding: 0;
}
.slider .frame {
  width: 186px;
  padding-top: 2px;
  font-family: 'Liberation Mono', monospace;
  font-size: 15px;
  color: #ddd;
}
.track-row {
  display: flex;
  height: 37px;
  margin-right: 73px;
  border-top: 1px solid #0c0c0c;
}
.mini {
  width: 73px;
  padding-right: 12px;
}
.ruler {
  display: flex;
  flex: 1;
  background: #2a2a2a;
}
.ruler span {
  display: flex;
  align-items: flex-end;
  justify-content: center;
  flex: 1 0 0;
  width: 0;
  background: linear-gradient(#666, #666) 50% 0 / 1px 17px no-repeat;
}
.ruler .major {
  background-size: 1px 100%;
}
.ruler .now {
  background: linear-gradient(#8f8620, #8f8620) 50% 0 / 11px 100% no-repeat;
}
.ruler b {
  font: 15px/18px 'Liberation Mono', monospace;
  color: #c4c4c4;
}
.status {
  display: flex;
  height: 77px;
  padding-top: 3px;
}
.script {
  display: flex;
  flex-direction: column;
  width: 148px;
  margin: 2px 5px 0 4px;
}
.script input {
  height: 35px;
  width: 100%;
  border: 2px solid #fff;
  border-top-color: #777;
  border-left-color: #777;
}
.pink {
  background: #dcc3c3;
}
.script .white {
  height: 37px;
  padding-left: 3px;
  padding-bottom: 8px;
  background: #fff;
  color: #777;
  font: 18px/20px 'Liberation Mono', 'Noto Sans CJK SC', monospace;
}
.bline {
  width: 2px;
  background: #111;
}
.msgs {
  flex: 1;
  padding-left: 4px;
}
.msgs p {
  height: 37px;
  line-height: 40px;
  font-weight: 300;
}
.coords {
  width: 656px;
}
.crow {
  display: flex;
  align-items: center;
  height: 40px;
}
.crow label {
  display: flex;
  align-items: center;
  gap: 4px;
  margin-right: 18px;
  font-family: 'Liberation Mono', monospace;
  font-size: 15px;
}
.crow input {
  width: 88px;
  height: 28px;
  border: 1px solid #3a3a3a;
  background: #5a5a5a;
}
.iso {
  margin-right: 15px;
}
.lock {
  margin-right: 17px;
}
.abs {
  margin-right: 11px;
}
.gridsize {
  margin-left: 3px;
  padding-bottom: 2px;
}
.crow.tag {
  height: 34px;
  padding-left: 462px;
}
.tag .bline {
  height: 24px;
}
.cubebtn {
  width: 32px;
  height: 32px;
  margin-right: 6px;
  border-radius: 5px;
  background: #5d89c0;
}
.tag span {
  color: #ccc;
}
.playback {
  width: 200px;
  padding: 1px 0 0 2px;
}
.prow {
  display: flex;
  align-items: center;
  height: 34px;
}
.prow button {
  width: 33px;
}
.prow .w42 {
  width: 42px;
}
.psep {
  width: 2px;
  height: 24px;
  margin-right: 1px;
  background: #1a1a1a;
}
.num {
  position: relative;
}
.num input {
  display: block;
  width: 104px;
  height: 26px;
  padding-left: 4px;
  border: 1px solid #3a3a3a;
  background: #646464;
  font: 15px 'Liberation Mono', monospace;
}
.num i {
  position: absolute;
  right: 6px;
  width: 8px;
  height: 6px;
  background: #ddd;
}
.up {
  top: 5px;
  clip-path: polygon(50% 0, 100% 100%, 0 100%);
}
.dn {
  bottom: 6px;
  clip-path: polygon(0 0, 100% 0, 50% 100%);
}
.addkey {
  width: 62px;
  height: 68px;
  margin: 4px 4px 0 0;
}
.keycol {
  display: flex;
  flex-direction: column;
  gap: 1px;
  width: 99px;
  margin: 4px 4px 0 0;
}
.keycol .btn {
  height: 32px;
}
.selcol {
  width: 168px;
  padding-top: 4px;
}
.selcol .sel {
  margin: 0;
}
.filrow {
  display: flex;
  gap: 3px;
  margin-top: 9px;
}
.filrow .fly {
  width: 34px;
}
.filrow .btn {
  width: 129px;
  height: 31px;
}
.fly {
  background: linear-gradient(135deg, transparent 50%, #e8e8e8 50%) right bottom / 6px 6px no-repeat;
}
.prow .fly {
  height: 30px;
}
.nav {
  display: grid;
  grid-template: 34px 34px / repeat(4, 1fr);
  width: 138px;
  margin: 1px 0 0 21px;
}
.nav button {
  height: 34px;
}
.meter {
  width: 12px;
  margin-left: auto;
  margin-top: -3px;
  border-left: 4px solid #23262f;
  border-top: 5px solid #23262f;
  background: repeating-linear-gradient(transparent 0 2px, #23262f 2px 3px), linear-gradient(#2a2f3e 24px, #c99a2e 25px, #a4bf4f 50px, #4fb3a0);
}
.dialog {
  position: absolute;
  border-radius: 10px;
  background: #444;
  box-shadow: 0 8px 40px rgba(0, 0, 0, 0.55), 0 0 0 1px #4c4c4c;
}
.units {
  left: 1055px;
  top: 461px;
  width: 450px;
  height: 597px;
}
.system {
  left: 1523px;
  top: 462px;
  width: 394px;
  height: 373px;
}
.dialog header {
  display: flex;
  align-items: center;
  height: 43px;
  padding: 0 10px 0 12px;
  border-radius: 9px 9px 0 0;
  background: #f3f3f3;
  color: #8a8a8a;
}
.system header {
  height: 42px;
  padding-right: 0;
  background: #eef3fb;
  color: #111;
}
.dialog h2 {
  flex: 1;
  padding-bottom: 3px;
}
.dialog header button {
  width: 50px;
  font-size: 20px;
}
.units header button:nth-child(2) {
  margin-right: 19px;
}
.dbody {
  display: flex;
  flex-direction: column;
  padding: 20px 6px 0 7px;
}
.sysbtn {
  height: 31px;
  margin: 0 17px 34px 21px;
  padding-bottom: 2px;
  border: 1px solid #3f3f3f;
  border-radius: 5px;
  background: #383838;
}
fieldset {
  min-width: 0;
  margin: 0;
  padding: 13px 16px 5px 20px;
  border: 1px solid #383838;
  border-radius: 4px;
}
legend {
  margin-left: -15px;
  padding: 0 4px;
}
.rad {
  display: flex;
  align-items: center;
  gap: 10px;
}
.rad input {
  appearance: none;
  width: 18px;
  height: 18px;
  border: 1px solid #3a3a3a;
  border-radius: 50%;
  background: #626262;
}
.rad input:checked {
  background: radial-gradient(circle, #e4e4e4 5px, #626262 6px);
}
.rad.off {
  color: #858585;
}
.rad.off input {
  background: #585858;
}
.rad.off input:checked {
  background: radial-gradient(circle, #999 5px, #585858 6px);
}
.line {
  display: flex;
  padding-left: 22px;
}
.m6 {
  margin-top: 6px;
}
.m27 {
  margin-top: 27px;
}
.m3 {
  margin-top: 3px;
}
.m22 {
  margin-top: 22px;
}
.m16 {
  margin-top: 16px;
}
.grow {
  flex: 1;
}
.frac {
  width: 143px;
  margin-left: 10px;
}
.off select {
  background: #585858;
  color: #858585;
}
.sel.off::after {
  background: #999;
}
.def {
  margin-top: 13px;
  color: #858585;
}
.def .rad {
  margin-left: 9px;
}
.def span {
  width: 94px;
}
.cust {
  margin-top: 5px;
}
.cust input {
  width: 115px;
  height: 31px;
  padding: 0 0 7px 1px;
  border: 2px solid #fff;
  border-radius: 2px;
  background: #585858;
  color: #858585;
  font: 15px/18px 'Liberation Mono', monospace;
}
.cust .short {
  width: 81px;
}
.cust b {
  width: 27px;
  padding-left: 9px;
  font-weight: 400;
  line-height: 26px;
  text-align: center;
}
.cust .frac {
  margin-left: 12px;
}
.f2 {
  margin-top: 6px;
  padding: 8px 16px 17px 20px;
}
.acts {
  display: flex;
  justify-content: flex-end;
  gap: 16px;
  margin: 14px 17px 0 0;
}
.acts .btn {
  width: 112px;
  height: 31px;
}
.system .dbody {
  padding: 16px 16px 0 17px;
}
.s1 {
  padding: 6px 8px 0 6px;
  border-bottom: 0;
}
.s1 legend {
  margin-left: 0;
  padding: 0 11px;
}
.scale {
  padding-left: 0;
}
.scale label {
  width: 73px;
}
.scale input {
  width: 121px;
  height: 30px;
  padding: 0 0 2px 8px;
  border: 1px solid #3a3a3a;
  background: #646464;
  font: 15px 'Liberation Mono', monospace;
}
.chk {
  display: flex;
  align-items: center;
  gap: 6px;
  height: 24px;
  margin-top: 5px;
  padding-left: 68px;
}
.chk input {
  appearance: none;
  width: 17px;
  height: 17px;
  border: 1px solid #555;
  background: #646464;
}
.chk input:checked::after {
  content: '';
  display: block;
  width: 5px;
  height: 9px;
  margin: 0 0 0 4px;
  border: solid #eee;
  border-width: 0 3px 3px 0;
  transform: rotate(40deg);
}
.s2 {
  margin-top: 6px;
  padding: 3px 5px 10px 6px;
  border: 1px solid #383838;
  border-radius: 4px;
}
.orig {
  display: flex;
  justify-content: space-between;
  padding: 0 4px 0 5px;
}
.mono {
  font-family: 'Liberation Mono', monospace;
  font-size: 15px;
  line-height: 34px;
}
.rangewrap {
  height: 25px;
  margin: 10px 7px 2px 13px;
  background: linear-gradient(90deg, #0c0c0c 2px, transparent 2px) 0 6px / 10px 2px repeat-x;
}
.rangewrap input {
  appearance: none;
  display: block;
  width: 100%;
  height: 18px;
  background: linear-gradient(#0c0c0c, #0c0c0c) 0 12px / 100% 1px no-repeat;
}
.rangewrap input::-webkit-slider-thumb {
  appearance: none;
  width: 9px;
  height: 17px;
  border: solid #000;
  border-width: 0 2px 2px 0;
  background: #444;
}
.res {
  align-items: center;
  justify-content: flex-end;
  height: 24px;
  padding-left: 0;
}
.res + .res {
  margin-top: 10px;
}
.res label {
  margin-right: 8px;
  padding-bottom: 2px;
}
.res input {
  width: 187px;
  height: 24px;
  padding-left: 5px;
  border: 1px solid #3a3a3a;
  background: #646464;
  font: 15px 'Liberation Mono', monospace;
}
.system .acts {
  margin: 28px -4px 0 0;
}
.system .acts .btn {
  height: 32px;
}
.system .btn.focus {
  border: 1px dotted #ccc;
}
.mark {
  position: absolute;
  border: 6px solid #ff2012;
  border-radius: 3px;
}
.mark.a {
  left: 1132px;
  top: 13px;
  width: 148px;
  height: 72px;
}
.mark.b {
  left: 1039px;
  top: 595px;
  width: 468px;
  height: 105px;
}
.mark.c {
  left: 1536px;
  top: 496px;
  width: 385px;
  height: 100px;
}
</style>
